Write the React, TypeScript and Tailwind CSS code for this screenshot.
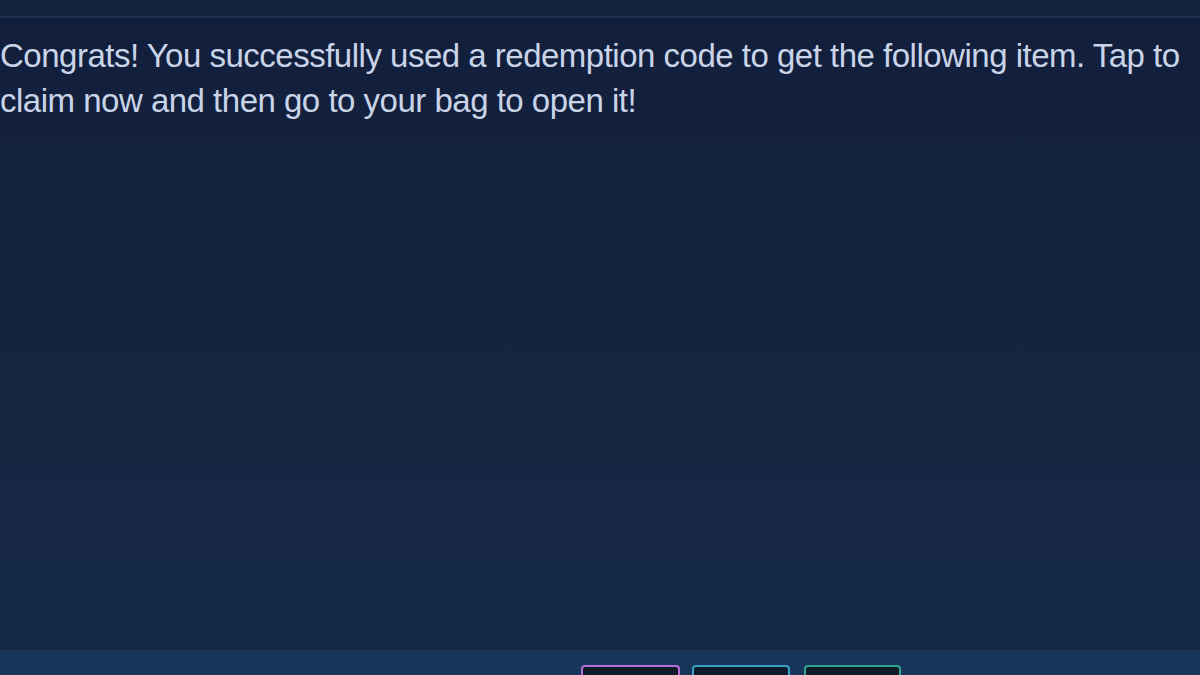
export default function App() {
  return (
    <div className="w-[1200px] h-[675px] overflow-hidden flex flex-col bg-[#13213c]" style={{ fontFamily: '"Liberation Sans", Arial, sans-serif' }}>
      <div className="h-[16px] shrink-0 bg-[#13233d]" />
      <div className="h-[2px] shrink-0 bg-[#1d304d]" />
      <div className="flex-1 flex flex-col bg-gradient-to-b from-[#121f3c] via-[#142440] to-[#162a47]">
        <div className="pt-[15px] text-[33px] tracking-[-0.5px] leading-[45px] text-[#c9d4e8] whitespace-nowrap">
          <div>Congrats! You successfully used a redemption code to get the following item. Tap to</div>
          <div>claim now and then go to your bag to open it!</div>
        </div>
      </div>
      <div className="h-[25px] shrink-0 bg-[#17365a] flex items-start justify-center pt-[15px] gap-[12px] pl-[282px]">
        <div className="w-[99px] h-[20px] rounded-t-[4px] border-2 border-b-0 border-[#b66cd8] bg-[#0e1b2b]" />
        <div className="w-[98px] h-[20px] rounded-t-[4px] border-2 border-b-0 border-[#3aa0c4] bg-[#0e1b2b]" />
        <div className="ml-[2px] w-[97px] h-[20px] rounded-t-[4px] border-2 border-b-0 border-[#2ba58a] bg-[#0e1b2b]" />
      </div>
    </div>
  );
}
